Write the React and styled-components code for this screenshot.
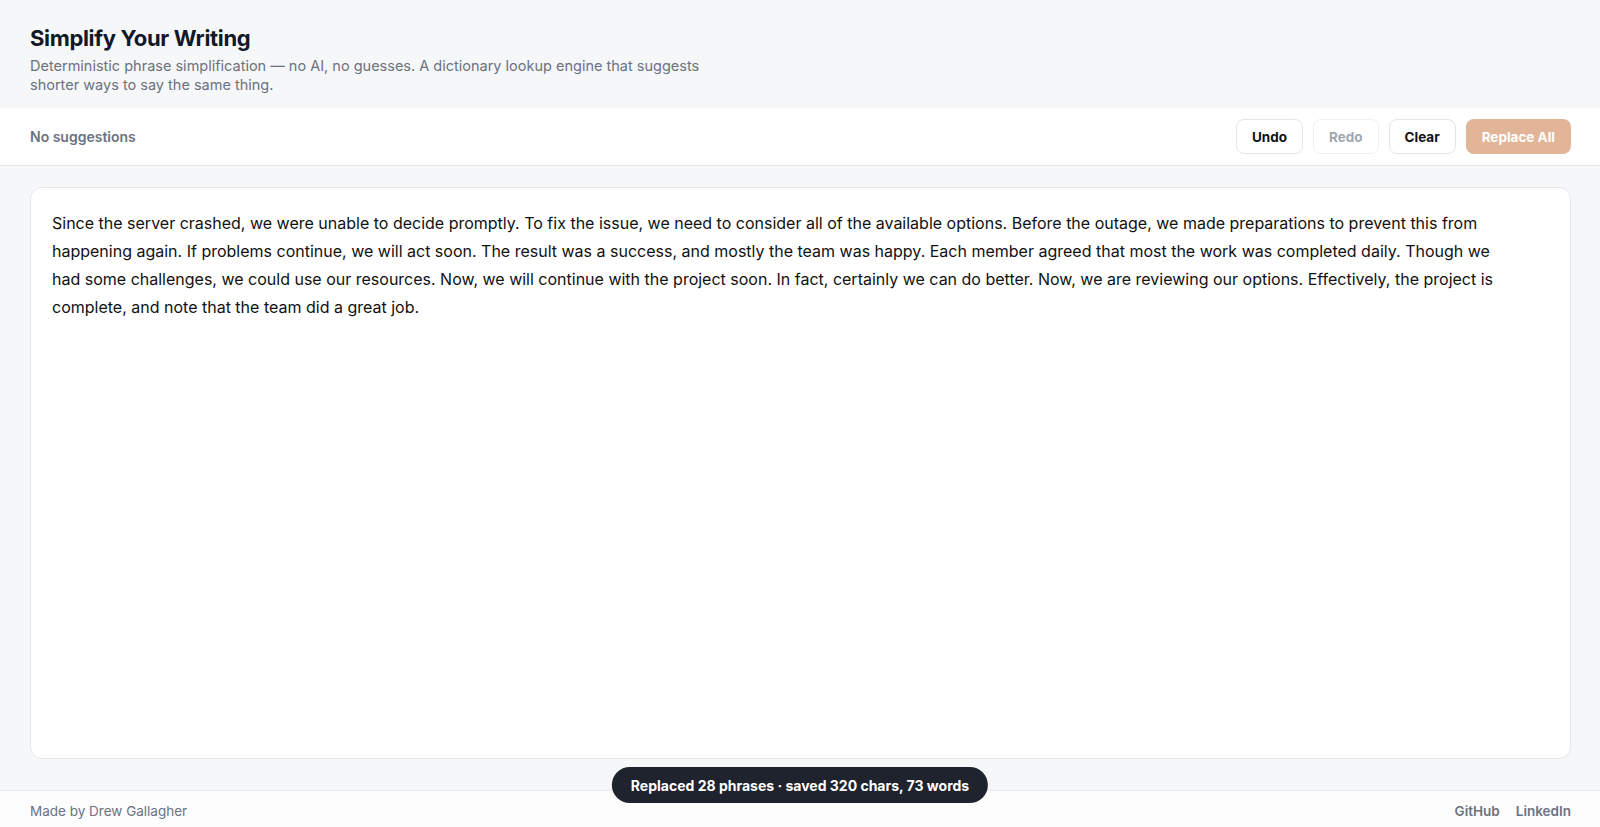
import styled, { createGlobalStyle } from 'styled-components';

const GlobalStyle = createGlobalStyle`
  html, body {
    margin: 0;
    padding: 0;
    height: 100%;
  }
  body {
    font-family: Inter, "Noto Sans", "Liberation Sans", sans-serif;
    background: #f6f7f9;
    color: #111827;
    -webkit-font-smoothing: antialiased;
  }
  #root {
    height: 100%;
  }
`;

const Page = styled.div`
  display: flex;
  flex-direction: column;
  height: 100vh;
  box-sizing: border-box;
`;

const Header = styled.header`
  padding: 24px 30px 14px;
  background: #f6f7f9;
`;

const Title = styled.h1`
  margin: 0;
  font-size: 22px;
  line-height: 28px;
  font-weight: 700;
  letter-spacing: -0.015em;
  color: #111827;
`;

const Subtitle = styled.p`
  margin: 4px 0 0;
  max-width: 680px;
  font-size: 14.5px;
  line-height: 19px;
  color: #6b7280;
`;

const Toolbar = styled.div`
  display: flex;
  align-items: center;
  justify-content: space-between;
  padding: 11px 29px 11px 30px;
  background: #ffffff;
  border-bottom: 1px solid #e5e7eb;
`;

const Status = styled.span`
  font-size: 14px;
  font-weight: 600;
  color: #6b7280;
`;

const Actions = styled.div`
  display: flex;
  gap: 10px;
`;

const Button = styled.button`
  height: 35px;
  min-width: 65px;
  padding: 0 15px;
  border-radius: 8px;
  font-family: inherit;
  font-size: 13.5px;
  font-weight: 700;
  cursor: pointer;
  border: 1px solid ${p => (p.$primary ? 'transparent' : p.disabled ? '#f0f1f3' : '#e3e5e8')};
  background: ${p => (p.$primary ? '#e2b599' : '#ffffff')};
  color: ${p => (p.$primary ? '#ffffff' : p.disabled ? '#a3a6ad' : '#111111')};

  &:disabled {
    cursor: default;
  }
`;

const Main = styled.main`
  flex: 1;
  display: flex;
  padding: 21px 29px 31px 30px;
  min-height: 0;
`;

const Editor = styled.div`
  flex: 1;
  box-sizing: border-box;
  padding: 21px 50px 20px 21px;
  background: #ffffff;
  border: 1px solid #e5e7eb;
  border-radius: 12px;
  font-size: 16px;
  line-height: 28px;
  color: #111111;
  outline: none;
  overflow: auto;
`;

const Footer = styled.footer`
  display: flex;
  align-items: center;
  justify-content: space-between;
  height: 37px;
  padding: 4px 29px 0 30px;
  box-sizing: border-box;
  background: #fdfdfd;
  border-top: 1px solid #e8eaed;
  font-size: 13.5px;
  color: #6b7280;
`;

const Links = styled.nav`
  display: flex;
  gap: 16px;
`;

const FooterLink = styled.a`
  color: #6b7280;
  font-weight: 600;
  text-decoration: none;

  &:hover {
    color: #111827;
  }
`;

const Toast = styled.div`
  position: fixed;
  left: 50%;
  bottom: 24px;
  transform: translateX(-50%);
  height: 36px;
  display: flex;
  align-items: center;
  padding: 0 19px;
  border-radius: 999px;
  background: #1f232d;
  color: #ffffff;
  font-size: 14px;
  font-weight: 700;
  white-space: nowrap;
`;

const TEXT =
  'Since the server crashed, we were unable to decide promptly. To fix the issue, we need to consider all of the available options. Before the outage, we made preparations to prevent this from happening again. If problems continue, we will act soon. The result was a success, and mostly the team was happy. Each member agreed that most the work was completed daily. Though we had some challenges, we could use our resources. Now, we will continue with the project soon. In fact, certainly we can do better. Now, we are reviewing our options. Effectively, the project is complete, and note that the team did a great job.';

const App = () => {
  return (
    <Page>
      <GlobalStyle />
      <Header>
        <Title>Simplify Your Writing</Title>
        <Subtitle>
          Deterministic phrase simplification — no AI, no guesses. A dictionary lookup engine
          that suggests shorter ways to say the same thing.
        </Subtitle>
      </Header>
      <Toolbar>
        <Status>No suggestions</Status>
        <Actions>
          <Button>Undo</Button>
          <Button disabled>Redo</Button>
          <Button>Clear</Button>
          <Button $primary>Replace All</Button>
        </Actions>
      </Toolbar>
      <Main>
        <Editor contentEditable suppressContentEditableWarning spellCheck={false}>
          {TEXT}
        </Editor>
      </Main>
      <Footer>
        <span>Made by Drew Gallagher</span>
        <Links>
          <FooterLink href="#">GitHub</FooterLink>
          <FooterLink href="#">LinkedIn</FooterLink>
        </Links>
      </Footer>
      <Toast>Replaced 28 phrases · saved 320 chars, 73 words</Toast>
    </Page>
  );
};

export default App;
